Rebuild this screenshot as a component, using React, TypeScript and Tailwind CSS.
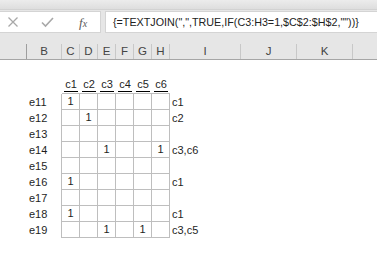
import React from 'react'

const cols = ['A', 'B', 'C', 'D', 'E', 'F', 'G', 'H', 'I', 'J', 'K', 'L']
const widths = ['w-[27px]', 'w-[35px]', 'w-[18px]', 'w-[18px]', 'w-[18px]', 'w-[18px]', 'w-[18px]', 'w-[18px]', 'w-[71px]', 'w-[56px]', 'w-[56px]', 'flex-1']

const rows = [
    { label: 'e11', ones: [0], out: 'c1' },
    { label: 'e12', ones: [1], out: 'c2' },
    { label: 'e13', ones: [], out: '' },
    { label: 'e14', ones: [2, 5], out: 'c3,c6' },
    { label: 'e15', ones: [], out: '' },
    { label: 'e16', ones: [0], out: 'c1' },
    { label: 'e17', ones: [], out: '' },
    { label: 'e18', ones: [0], out: 'c1' },
    { label: 'e19', ones: [2, 4], out: 'c3,c5' },
]

const heads = ['c1', 'c2', 'c3', 'c4', 'c5', 'c6']

const App = () => {
    return (
        <div className="w-[377px] h-[257px] overflow-hidden bg-white text-[11px] text-[#1e1e1e] font-['Liberation_Sans',Arial,sans-serif]">
            {/* ribbon edge */}
            <div className="h-[10px] bg-gradient-to-b from-[#ececec] to-[#dedede] border-b border-[#d2d2d2]" />

            {/* formula bar */}
            <div className="h-[24px] flex bg-[#e6e6e6] pt-[1px]">
                <div className="w-[101px] h-[22px] bg-white border-y border-r border-[#d4d4d4] flex items-center">
                    <svg width="12" height="12" viewBox="0 0 12 12" className="ml-[7px]">
                        <path d="M1.5 1.5 L10.5 10.5 M10.5 1.5 L1.5 10.5" stroke="#a8a8a8" strokeWidth="1.3" fill="none" />
                    </svg>
                    <svg width="13" height="12" viewBox="0 0 13 12" className="ml-[22px]">
                        <path d="M1 6.5 L4.5 10 L12 2" stroke="#a8a8a8" strokeWidth="1.6" fill="none" />
                    </svg>
                    <span className="ml-[25px] text-[#5a5a5a] italic font-['Liberation_Serif',serif] text-[13px] leading-none">
                        f<span className="text-[10px]">x</span>
                    </span>
                </div>
                <div className="ml-[4px] flex-1 h-[22px] bg-white border-y border-l border-[#d4d4d4] flex items-center pl-[7px] text-[10.75px] text-[#222] whitespace-nowrap">
                    {'{=TEXTJOIN(",",TRUE,IF(C3:H3=1,$C$2:$H$2,""))}'}
                </div>
            </div>

            <div className="h-[10px] bg-[#e6e6e6]" />

            {/* column headers */}
            <div className="h-[16px] flex bg-[#e6e6e6] border-b border-[#a6a6a6] text-[#444] text-[11.5px]">
                {cols.map((c, i) => (
                    <div
                        key={c}
                        className={`${widths[i]} flex items-center justify-center ${i === 0 ? 'border-r border-[#9e9e9e]' : i === cols.length - 1 ? '' : 'border-r border-[#c8c8c8]'}`}
                    >
                        {i === 0 || i === cols.length - 1 ? '' : c}
                    </div>
                ))}
            </div>

            {/* sheet */}
            <div className="pt-[18px]">
                <div className="flex h-[16px]">
                    <div className="w-[27px]" />
                    <div className="w-[35px]" />
                    {heads.map((h) => (
                        <div key={h} className="w-[18px] flex justify-center items-end border-b border-[#bebebe]">
                            <span className="border-b-[1.5px] border-black leading-[13px] px-[1px] mb-[1px]">{h}</span>
                        </div>
                    ))}
                </div>
                {rows.map((r) => (
                    <div key={r.label} className="flex h-[16px]">
                        <div className="w-[27px]" />
                        <div className="w-[35px] border-r border-[#bebebe] pl-[2px] flex items-center">{r.label}</div>
                        {heads.map((h, j) => (
                            <div key={h} className="w-[18px] border-r border-b border-[#bebebe] flex items-center justify-center">
                                {r.ones.includes(j) ? '1' : ''}
                            </div>
                        ))}
                        <div className="w-[71px] pl-[2px] flex items-center">{r.out}</div>
                    </div>
                ))}
            </div>
        </div>
    )
}

export default App
